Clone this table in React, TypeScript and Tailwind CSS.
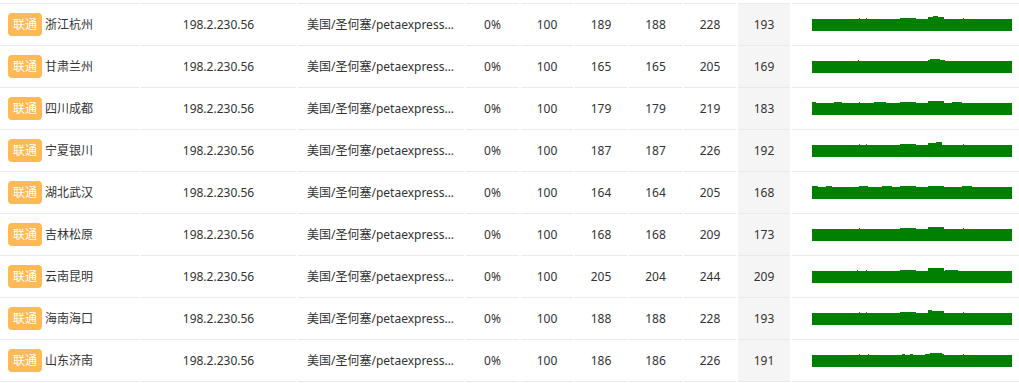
import React from 'react'

type Row = {
  city: string
  last: number
  avg: number
  best: number
  worst: number
  stdev: number
  bumps: [number, number, number][]
}

const rows: Row[] = [
  { city: '浙江杭州', last: 189, avg: 188, best: 228, worst: 193, stdev: 0, bumps: [[47, 48, 1], [54, 55, 1], [88, 104, 1], [116, 121, 2], [121, 126, 3], [126, 132, 2], [151, 152, 1]] },
  { city: '甘肃兰州', last: 165, avg: 165, best: 205, worst: 169, stdev: 0, bumps: [[46, 47, 1], [116, 133, 1], [118, 128, 2]] },
  { city: '四川成都', last: 179, avg: 179, best: 219, worst: 183, stdev: 0, bumps: [[0, 4, 1], [22, 30, 1], [47, 48, 1], [62, 74, 1], [88, 104, 1], [116, 132, 2], [140, 150, 1]] },
  { city: '宁夏银川', last: 187, avg: 187, best: 226, worst: 192, stdev: 0, bumps: [[47, 48, 1], [54, 55, 1], [88, 104, 1], [116, 124, 2], [124, 130, 3], [151, 152, 1]] },
  { city: '湖北武汉', last: 164, avg: 164, best: 205, worst: 168, stdev: 0, bumps: [[0, 6, 1], [14, 20, 1], [47, 56, 1], [70, 80, 1], [88, 104, 1], [116, 132, 1], [150, 160, 1]] },
  { city: '吉林松原', last: 168, avg: 168, best: 209, worst: 173, stdev: 0, bumps: [[47, 48, 1], [88, 104, 1], [116, 132, 2], [151, 152, 1]] },
  { city: '云南昆明', last: 205, avg: 204, best: 244, worst: 209, stdev: 0, bumps: [[45, 46, 1], [54, 55, 1], [88, 104, 1], [116, 132, 3], [133, 146, 1]] },
  { city: '海南海口', last: 188, avg: 188, best: 228, worst: 193, stdev: 0, bumps: [[47, 48, 1], [54, 55, 1], [88, 104, 1], [116, 120, 3], [120, 132, 2], [151, 152, 1]] },
  { city: '山东济南', last: 186, avg: 186, best: 226, worst: 191, stdev: 0, bumps: [[47, 48, 1], [56, 57, 1], [90, 93, 1], [98, 101, 1], [113, 118, 1], [118, 130, 2], [130, 132, 1], [151, 152, 1]] },
]

function sparkPath(bumps: [number, number, number][]) {
  const h = new Array(200).fill(12)
  bumps.forEach(([s, e, v]) => {
    for (let i = s; i < e && i < 200; i++) h[i] = Math.max(h[i], 12 + v)
  })
  let d = 'M0 16'
  h.forEach((v, i) => { d += ` V${16 - v} H${i + 1}` })
  return d + ' V16 Z'
}

export default function App() {
  const cell = 'h-[42px] border-b border-[#e8eaec] text-center p-0 align-middle'
  return (
    <div className="w-[1019px] h-[383px] overflow-hidden bg-white text-[12px] text-[#333]"
      style={{ fontFamily: '"Noto Sans", "Noto Sans CJK SC", sans-serif' }}>
      <table className="table-fixed border-separate border-spacing-x-[2px] border-spacing-y-0 -ml-[2px] w-[1023px]">
        <tbody>
          <tr>
            {[139, 155, 166, 53, 52, 52, 53, 52, 52, 227].map((w, i) => (
              <td key={i} style={{ width: w }} className="h-[4px] p-0 border-b border-[#e8eaec]"></td>
            ))}
          </tr>
          {rows.map(r => (
            <tr key={r.city}>
              <td className={`${cell} text-left pl-[8px]`}>
                <div className="flex items-center">
                  <span className="bg-[#ffb955] text-white rounded-[4px] h-[23px] px-[5px] leading-[23px]">联通</span>
                  <span className="ml-[3px]">{r.city}</span>
                </div>
              </td>
              <td className={cell}>198.2.230.56</td>
              <td className={`${cell} text-left px-[9px] whitespace-nowrap overflow-hidden text-ellipsis`}>美国/圣何塞/petaexpress.com</td>
              <td className={cell}>0%</td>
              <td className={cell}>100</td>
              <td className={cell}>{r.last}</td>
              <td className={cell}>{r.avg}</td>
              <td className={cell}>{r.best}</td>
              <td className={`${cell} bg-[#f5f5f5]`}>{r.worst}</td>
              <td className={`${cell} text-left pl-[20px] pb-[3px]`}>
                <svg width="200" height="16" viewBox="0 0 200 16" className="block">
                  <path d={sparkPath(r.bumps)} fill="#008000" />
                </svg>
              </td>
            </tr>
          ))}
        </tbody>
      </table>
    </div>
  )
}
